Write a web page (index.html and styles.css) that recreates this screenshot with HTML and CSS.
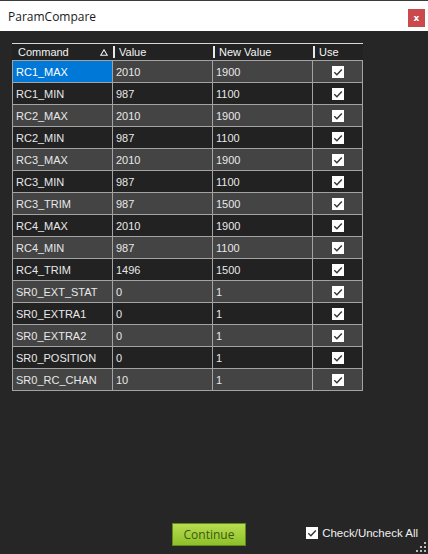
FILE: index.html
```html
<!DOCTYPE html>
<html lang="en">
<head>
  <meta charset="UTF-8">
  <title>ParamCompare</title>
  <link rel="stylesheet" href="styles.css">
</head>
<body>

  <div class="titlebar">
    <span class="title">ParamCompare</span>
    <span class="close">x</span>
  </div>

  <div class="main">
    <div class="grid" id="grid">
      <div class="head">
        <div class="hcell">Command
          <svg class="sort" width="8" height="7" viewBox="0 0 8 7"><path d="M4 0.8 L7.3 6.3 L0.7 6.3 Z" fill="none" stroke="#f0f0f0" stroke-width="1.1"/></svg>
        </div>
        <div class="hcell sep">Value</div>
        <div class="hcell sep">New Value</div>
        <div class="hcell sep">Use</div>
      </div>
    </div>
  </div>

  <div class="footer">
    <button class="continue">Continue</button>
    <label class="checkall">
      <span class="box"><svg width="12" height="12" viewBox="0 0 12 12"><path d="M2.3 6.2 L4.9 8.7 L9.8 3.4" fill="none" stroke="#333" stroke-width="1.4"/></svg></span>
      Check/Uncheck All
    </label>
  </div>

  <svg class="grip" width="10" height="10" viewBox="0 0 10 10">
    <rect x="8" y="0" width="2" height="2" fill="#bbb"/>
    <rect x="4" y="4" width="2" height="2" fill="#bbb"/>
    <rect x="8" y="4" width="2" height="2" fill="#bbb"/>
    <rect x="0" y="8" width="2" height="2" fill="#bbb"/>
    <rect x="4" y="8" width="2" height="2" fill="#bbb"/>
    <rect x="8" y="8" width="2" height="2" fill="#bbb"/>
  </svg>

  <script>
    const params = [
      ["RC1_MAX", "2010", "1900"],
      ["RC1_MIN", "987", "1100"],
      ["RC2_MAX", "2010", "1900"],
      ["RC2_MIN", "987", "1100"],
      ["RC3_MAX", "2010", "1900"],
      ["RC3_MIN", "987", "1100"],
      ["RC3_TRIM", "987", "1500"],
      ["RC4_MAX", "2010", "1900"],
      ["RC4_MIN", "987", "1100"],
      ["RC4_TRIM", "1496", "1500"],
      ["SR0_EXT_STAT", "0", "1"],
      ["SR0_EXTRA1", "0", "1"],
      ["SR0_EXTRA2", "0", "1"],
      ["SR0_POSITION", "0", "1"],
      ["SR0_RC_CHAN", "10", "1"]
    ];

    const tick = '<span class="box"><svg width="12" height="12" viewBox="0 0 12 12">' +
      '<path d="M2.3 6.2 L4.9 8.7 L9.8 3.4" fill="none" stroke="#333" stroke-width="1.4"/></svg></span>';

    const grid = document.getElementById("grid");
    params.forEach((p, i) => {
      const shade = i % 2 === 0 ? "light" : "dark";
      p.forEach((text, c) => {
        const cell = document.createElement("div");
        cell.className = "cell " + shade + (i === 0 && c === 0 ? " selected" : "");
        cell.textContent = text;
        grid.appendChild(cell);
      });
      const use = document.createElement("div");
      use.className = "cell use " + shade;
      use.innerHTML = tick;
      grid.appendChild(use);
    });
  </script>

</body>
</html>
```

FILE: styles.css
```css
html, body {
  margin: 0;
  height: 100%;
}

body {
  font-family: "Liberation Sans", Arial, sans-serif;
  background: #262626;
  color: #e8e8e8;
  display: flex;
  flex-direction: column;
}

.titlebar {
  height: 30px;
  border-top: 1px solid #3a3a3a;
  background: #ffffff;
  display: flex;
  align-items: center;
  justify-content: space-between;
  padding: 0 3px 0 8px;
}

.title {
  font-family: "Open Sans", sans-serif;
  font-size: 12px;
  color: #1a1a1a;
}

.close {
  width: 17px;
  height: 18px;
  margin-top: 4px;
  background: #c9494c;
  color: #fff;
  font-family: "DejaVu Sans", sans-serif;
  font-weight: bold;
  font-size: 9px;
  display: flex;
  align-items: center;
  justify-content: center;
}

.main {
  flex: 1;
  padding: 12px 0 0 12px;
}

/* grid lines come from the background showing through the 1px gaps */
.grid {
  display: grid;
  grid-template-columns: 99px 99px 99px 49px;
  gap: 1px;
  width: 349px;
  padding: 0 1px 1px 1px;
  background: #a3a3a3;
  border-top: 1px solid #d8d8d8;
}

.head {
  grid-column: 1 / -1;
  display: grid;
  grid-template-columns: 100px 100px 100px 49px;
  height: 16px;
  margin: 0 -1px;
  padding-left: 1px;
  background: #222222;
  font-size: 11px;
  color: #f4f4f4;
}

.hcell {
  display: flex;
  align-items: center;
  padding-left: 5px;
  position: relative;
}

.hcell.sep {
  padding-left: 6px;
}

.hcell.sep::before {
  content: "";
  position: absolute;
  left: 0;
  top: 2px;
  width: 2px;
  height: 12px;
  background: #e8e8e8;
}

.sort {
  margin-left: auto;
  margin-right: 5px;
}

.cell {
  height: 21px;
  display: flex;
  align-items: center;
  padding-left: 3px;
  font-size: 11px;
}

.cell.light {
  background: #444444;
}

.cell.dark {
  background: #222222;
}

.cell.selected {
  background: #0078d7;
  color: #fff;
}

.cell.use {
  justify-content: center;
  padding-left: 0;
}

.box {
  display: inline-flex;
  width: 12px;
  height: 12px;
  background: #fff;
}

.footer {
  display: flex;
  align-items: center;
  padding: 0 10px 8px 172px;
}

.continue {
  width: 74px;
  height: 23px;
  border: 1px solid #5f8c18;
  background: linear-gradient(#b7dc50, #8ec02a);
  color: #3a5a0e;
  font-family: "Open Sans", sans-serif;
  font-size: 12px;
  padding: 0;
}

.checkall {
  margin-left: auto;
  display: flex;
  align-items: center;
  gap: 4px;
  font-size: 11.5px;
  color: #f0f0f0;
  margin-bottom: 3px;
}

.grip {
  position: absolute;
  right: 2px;
  bottom: 2px;
}
```
